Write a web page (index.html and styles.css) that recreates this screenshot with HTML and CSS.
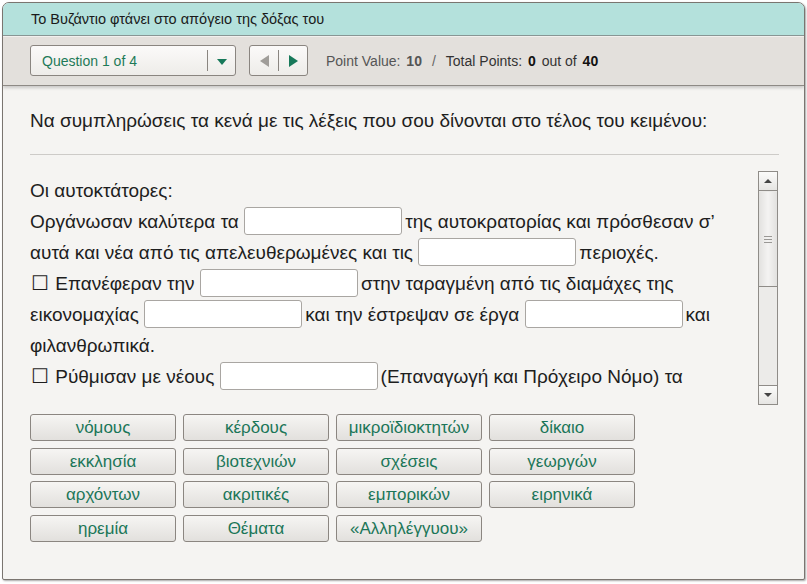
FILE: index.html
```html
<!DOCTYPE html>
<html lang="el">
<head>
<meta charset="utf-8">
<title>Quiz</title>
<link rel="stylesheet" href="styles.css">
</head>
<body>
<div class="window">
  <div class="titlebar">Το Βυζάντιο φτάνει στο απόγειο της δόξας του</div>
  <div class="toolbar">
    <div class="dropdown">
      <span class="dd-label">Question 1 of 4</span>
      <span class="dd-btn"><span class="tri-down"></span></span>
    </div>
    <div class="nav">
      <span class="nav-btn"><span class="tri-left"></span></span>
      <span class="nav-btn"><span class="tri-right"></span></span>
    </div>
    <div class="points">
      <span class="pv">Point Value: <b>10</b></span>
      <span class="slash">/</span>
      <span class="tp">Total Points: <b>0</b> out of <b>40</b></span>
    </div>
  </div>
  <div class="content">
    <p class="instruction">Να συμπληρώσεις τα κενά με τις λέξεις που σου δίνονται στο τέλος του κειμένου:</p>
    <div class="rule"></div>
    <div class="scrollbox">
      <div class="text">
        <div class="line">Οι αυτοκτάτορες:</div>
        <div class="line">Οργάνωσαν καλύτερα τα <span class="blank"></span>της αυτοκρατορίας και πρόσθεσαν σ’</div>
        <div class="line">αυτά και νέα από τις απελευθερωμένες και τις <span class="blank"></span>περιοχές.</div>
        <div class="line"><span class="box">☐</span> Επανέφεραν την <span class="blank"></span>στην ταραγμένη από τις διαμάχες της</div>
        <div class="line">εικονομαχίας <span class="blank"></span>και την έστρεψαν σε έργα <span class="blank"></span>και</div>
        <div class="line">φιλανθρωπικά.</div>
        <div class="line"><span class="box">☐</span> Ρύθμισαν με νέους <span class="blank"></span>(Επαναγωγή και Πρόχειρο Νόμο) τα</div>
      </div>
      <div class="scrollbar">
        <div class="sb-btn"><span class="sb-up"></span></div>
        <div class="sb-thumb"><span class="grip"></span></div>
        <div class="sb-track"></div>
        <div class="sb-btn"><span class="sb-down"></span></div>
      </div>
    </div>
    <div class="words">
      <span class="word">νόμους</span>
      <span class="word">κέρδους</span>
      <span class="word">μικροϊδιοκτητών</span>
      <span class="word">δίκαιο</span>
      <span class="word">εκκλησία</span>
      <span class="word">βιοτεχνιών</span>
      <span class="word">σχέσεις</span>
      <span class="word">γεωργών</span>
      <span class="word">αρχόντων</span>
      <span class="word">ακριτικές</span>
      <span class="word">εμπορικών</span>
      <span class="word">ειρηνικά</span>
      <span class="word">ηρεμία</span>
      <span class="word">Θέματα</span>
      <span class="word">«Αλληλέγγυου»</span>
    </div>
  </div>
</div>
</body>
</html>
```
FILE: styles.css
```css
* { box-sizing: border-box; }
html, body { margin: 0; padding: 0; }
body {
  background: #ffffff;
  font-family: "Liberation Sans", Arial, sans-serif;
  color: #222;
  width: 807px;
  height: 584px;
  overflow: hidden;
}
.window {
  margin: 2px 0 0 2px;
  width: 803px;
  height: 578px;
  border: 1px solid #7a7570;
  border-radius: 7px 7px 2px 2px;
  background: #f5f4f2;
  overflow: hidden;
  box-shadow: 1px 1px 2px rgba(0,0,0,0.35);
  display: flex;
  flex-direction: column;
}
.titlebar {
  height: 33px;
  flex: none;
  background: #b4e1dc;
  border-bottom: 1px solid #8a9896;
  padding-left: 28px;
  font-size: 14.5px;
  line-height: 33px;
  color: #1a1a1a;
}
.toolbar {
  height: 50px;
  flex: none;
  background: #e3e0dc;
  border-top: 1px solid #f2f0ee;
  border-bottom: 1px solid #8e8a85;
  box-shadow: 0 2px 3px rgba(0,0,0,0.18);
  display: flex;
  align-items: center;
  padding-left: 27px;
  position: relative;
  z-index: 1;
}
.dropdown {
  width: 206px;
  height: 31px;
  margin-top: -1px;
  border: 1px solid #8a8580;
  border-radius: 3px;
  background: linear-gradient(#fbfaf9, #eeece9);
  display: flex;
  align-items: center;
}
.dd-label {
  flex: 1;
  padding-left: 11px;
  font-size: 14px;
  color: #1e7a58;
}
.dd-btn {
  width: 28px;
  height: 21px;
  border-left: 1px solid #8a8580;
  display: flex;
  align-items: center;
  justify-content: center;
}
.tri-down {
  width: 0; height: 0;
  border-left: 5px solid transparent;
  border-right: 5px solid transparent;
  border-top: 6px solid #17795a;
  margin-top: 3px;
}
.nav {
  margin-left: 13px;
  margin-top: -1px;
  width: 59px;
  height: 31px;
  border: 1px solid #8a8580;
  border-radius: 3px;
  background: linear-gradient(#fbfaf9, #eeece9);
  display: flex;
  align-items: center;
}
.nav-btn {
  flex: 1;
  height: 21px;
  display: flex;
  align-items: center;
  justify-content: center;
}
.nav-btn + .nav-btn { border-left: 1px solid #8a8580; }
.tri-left {
  width: 0; height: 0;
  border-top: 6px solid transparent;
  border-bottom: 6px solid transparent;
  border-right: 9px solid #a09d99;
}
.tri-right {
  width: 0; height: 0;
  border-top: 6px solid transparent;
  border-bottom: 6px solid transparent;
  border-left: 9px solid #17795a;
}
.points {
  margin-left: 18px;
  font-size: 14px;
  color: #333;
  display: flex;
  align-items: center;
}
.points b { font-weight: bold; }
.pv { color: #555; }
.pv b { color: #555; margin-left: 2px; }
.slash { color: #666; margin: 0 10px; }
.tp b { color: #111; margin: 0 2px; }
.content {
  flex: 1;
  padding: 24px 24px 0 27px;
}
.instruction {
  margin: 0;
  font-size: 19px;
  line-height: 22px;
  color: #1e1e1e;
}
.rule {
  height: 1px;
  background: #cdcbc8;
  margin: 22px 0 0 0;
  width: 749px;
}
.scrollbox {
  margin-top: 16px;
  height: 234px;
  width: 749px;
  display: flex;
}
.text {
  flex: 1;
  overflow: hidden;
  padding-top: 4px;
  font-size: 19px;
  line-height: 31px;
  color: #1e1e1e;
}
.line { white-space: nowrap; height: 31px; }
.blank {
  display: inline-block;
  width: 158px;
  height: 28px;
  vertical-align: middle;
  margin-top: -4px;
  border: 1px solid #a9a6a2;
  border-radius: 3px;
  background: #fff;
  margin-right: 3px;
}
.box {
  font-family: "DejaVu Sans", sans-serif;
  font-size: 20px;
  margin-left: 1px;
  margin-right: 1px;
}
.scrollbar {
  width: 20px;
  flex: none;
  margin-right: 1px;
  display: flex;
  flex-direction: column;
  border: 1px solid #8f8c88;
  background: #eae9e7;
}
.sb-btn {
  height: 19px;
  flex: none;
  background: linear-gradient(#fbfbfa, #e6e5e3);
  border-bottom: 1px solid #8f8c88;
  display: flex;
  align-items: center;
  justify-content: center;
}
.sb-btn:last-child { border-bottom: none; border-top: 1px solid #8f8c88; }
.sb-up {
  width: 0; height: 0;
  border-left: 4px solid transparent;
  border-right: 4px solid transparent;
  border-bottom: 4px solid #444;
}
.sb-down {
  width: 0; height: 0;
  border-left: 4px solid transparent;
  border-right: 4px solid transparent;
  border-top: 4px solid #444;
}
.sb-thumb {
  height: 95px;
  flex: none;
  margin-top: 1px;
  background: linear-gradient(90deg, #e2e1df, #f4f3f2 50%, #e2e1df);
  border-bottom: 1px solid #8f8c88;
  display: flex;
  align-items: center;
  justify-content: center;
}
.grip {
  width: 8px;
  height: 7px;
  border-top: 1px solid #9a9895;
  border-bottom: 1px solid #9a9895;
  position: relative;
}
.grip::after {
  content: "";
  position: absolute;
  left: 0; right: 0; top: 2px;
  border-top: 1px solid #9a9895;
}
.sb-track { flex: 1; background: #ecebe9; }
.words {
  margin-top: 9px;
  display: grid;
  grid-template-columns: repeat(4, 146px);
  column-gap: 7px;
  row-gap: 6.5px;
}
.word {
  height: 27px;
  border: 1px solid #8b8681;
  border-radius: 3px;
  background: linear-gradient(#f6f5f3, #e2e0dd);
  color: #1b7658;
  font-size: 17px;
  text-align: center;
  line-height: 25px;
}
```
